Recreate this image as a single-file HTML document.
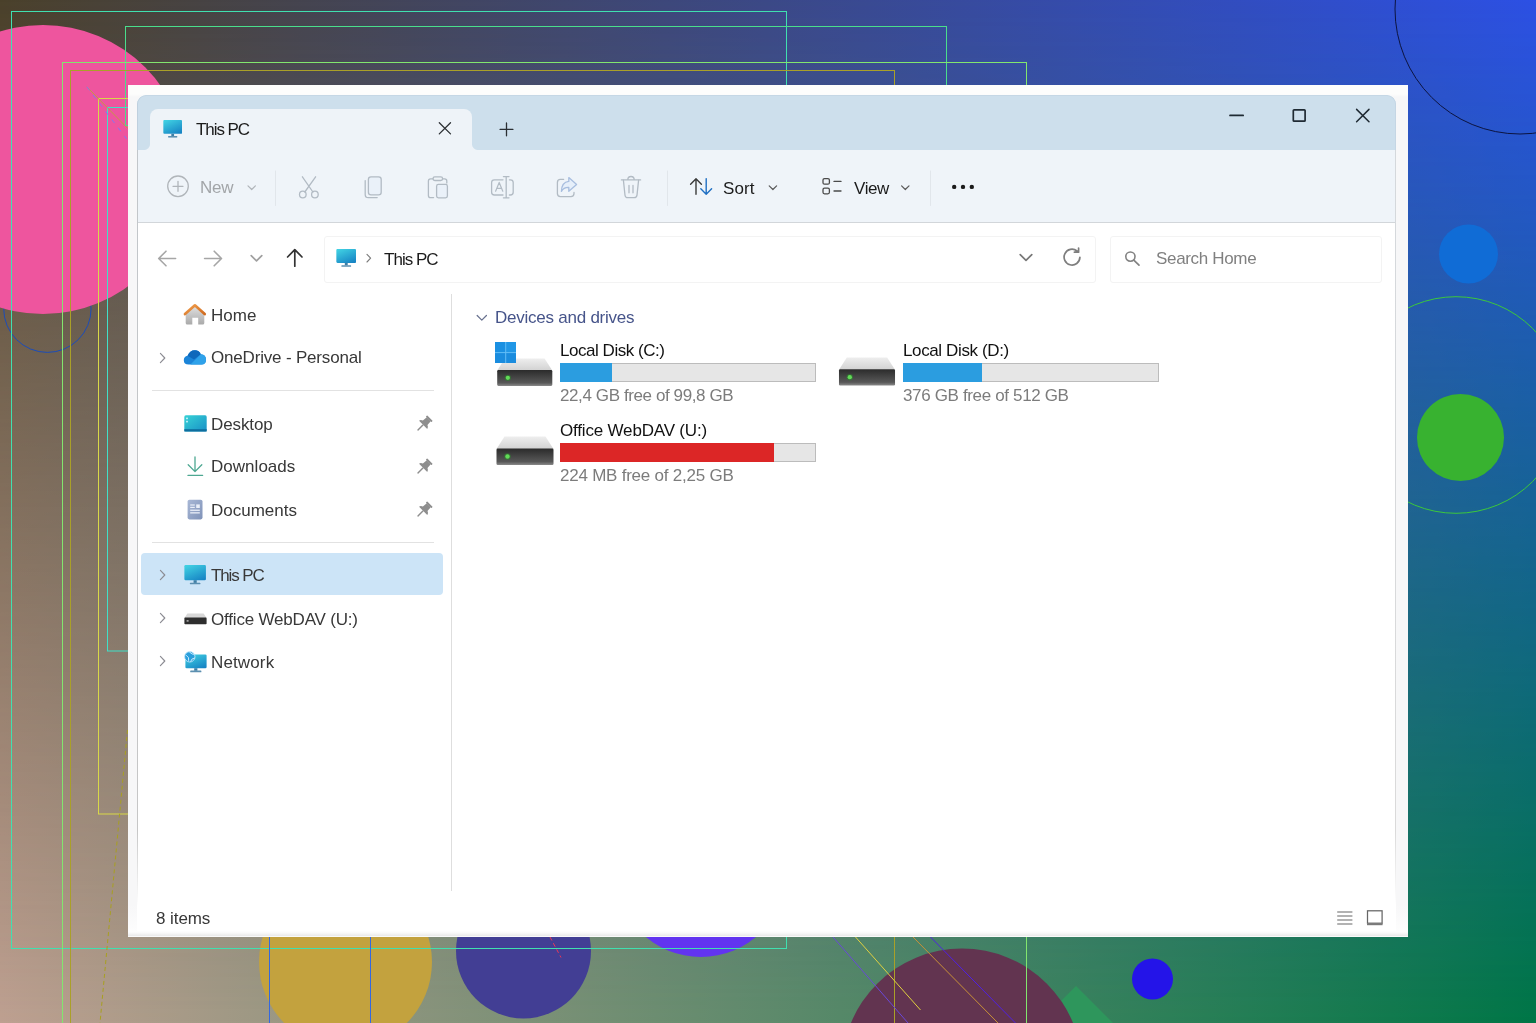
<!DOCTYPE html>
<html lang="en">
<head>
<meta charset="utf-8">
<title>This PC</title>
<style>
*{box-sizing:border-box;margin:0;padding:0}
html,body{width:1536px;height:1023px;overflow:hidden;background:#4a402a}
body{position:relative;font-family:"Liberation Sans",sans-serif;font-size:17px;color:#1b1b1b}
.abs{position:absolute}
#bg1{left:0;top:0;width:1536px;height:1023px;background:linear-gradient(to right,#bea091,#007646)}
#bg2{left:0;top:0;width:1536px;height:1023px;background:linear-gradient(to right,#4a402a,#2c50e4);
 -webkit-mask-image:linear-gradient(to bottom,#000,transparent);mask-image:linear-gradient(to bottom,#000,transparent)}
#deco{left:0;top:0;width:1536px;height:1023px}
/* window */
#frame{left:128px;top:85px;width:1280px;height:852px;background:linear-gradient(to bottom,#fdfdfc 0,#fdfdfc 9px,#f7f7f8 12px,#f7f7f8 820px,#fdfdfd 846px,#fdfdfd 847px,#ececec 850.5px,#fafafa 851.5px)}
#win{left:137px;top:95px;width:1259px;height:836px;background:#fff;border-radius:9px 9px 0 0;overflow:hidden}
#title{left:0;top:0;width:1259px;height:55px;background:#cddfec;border-radius:9px 9px 0 0;box-shadow:inset 0 1px 0 #c5d7e5,inset 1px 0 0 #bfd0de,inset -1px 0 0 #c5d6e4}
#tab{left:13px;top:14px;width:322px;height:41px;background:#eef3f8;border-radius:8px 8px 0 0}
#tab:before,#tab:after{content:"";position:absolute;bottom:0;width:6px;height:6px}
#tab:before{left:-6px;background:radial-gradient(circle at 0 0,transparent 5.5px,#eef3f8 6.5px)}
#tab:after{right:-6px;background:radial-gradient(circle at 100% 0,transparent 5.5px,#eef3f8 6.5px)}
#toolbar{left:0;top:55px;width:1259px;height:73px;background:#eff4f9;border-bottom:1px solid #d2d6da}
.bar{width:256px;height:19px;background:#e6e6e6;border:1px solid #bcbcbc}
.bar i{display:block;height:calc(100% + 2px);margin:-1px 0 0 -1px}
.t{will-change:transform;position:absolute;white-space:nowrap;line-height:20px;height:20px}
</style>
</head>
<body>
<div id="bg1" class="abs"></div>
<div id="bg2" class="abs"></div>
<svg id="deco" class="abs" width="1536" height="1023" viewBox="0 0 1536 1023" fill="none">
  <!-- outline circle under pink -->
  <circle cx="47.4" cy="308.7" r="43.7" stroke="#1c4cb8" stroke-width="1"/>
  <!-- filled circles -->
  <circle cx="43" cy="169.5" r="144.5" fill="#ee559e"/>
  <circle cx="1468.5" cy="254" r="29.5" fill="#106cd6"/>
  <circle cx="1460.5" cy="437.5" r="43.5" fill="#38b230"/>
  <circle cx="345.5" cy="962" r="86.5" fill="#c3a23e"/>
  <circle cx="523.5" cy="951" r="67.5" fill="#423e94"/>
  <circle cx="700.9" cy="871" r="86" fill="#6234f0"/>
  <path d="M1076 986 L1126 1036 L1076 1086 L1026 1036 Z" fill="#2e965c"/>
  <circle cx="962" cy="1068.5" r="120" fill="#623450"/>
  <circle cx="1152.5" cy="979" r="20.5" fill="#2414e8"/>
  <!-- outline circles -->
  <circle cx="1520" cy="9" r="125" stroke="#0c1440" stroke-width="1"/>
  <circle cx="1456" cy="405" r="108.3" stroke="#3cc83c" stroke-width="1"/>
  <!-- thin rectangles -->
  <rect x="11.5" y="11.5" width="775" height="937" stroke="#40e0b0"/>
  <rect x="125.5" y="26.5" width="821" height="99" stroke="#4ade8c"/>
  <rect x="62.5" y="62.5" width="964" height="1000" stroke="#82e66e"/>
  <rect x="70.5" y="70.5" width="824" height="1000" stroke="#aaa028"/>
  <rect x="98.5" y="98.5" width="400" height="715.5" stroke="#d8d848"/>
  <rect x="107.5" y="107.5" width="400" height="543.5" stroke="#40e0c8"/>
  <rect x="269.5" y="800" width="101" height="300" stroke="#3468e0"/>
  <!-- diagonals -->
  <path d="M86.8 86.8 L128 128.7" stroke="#c29a44"/>
  <path d="M86.8 86.8 L126.5 138.8" stroke="#8676f0" stroke-dasharray="4.5 5.8"/>
  <path d="M127.5 730 L100 1023" stroke="#a8a020" stroke-dasharray="4 3"/>
  <path d="M833 937 L908 1023" stroke="#6a48d8"/>
  <path d="M855.5 937 L920.5 1010" stroke="#e0d040"/>
  <path d="M913 937 L998 1023" stroke="#c89038"/>
  <path d="M930.5 937 L1015.5 1023" stroke="#5020e4"/>
  <path d="M550 937 L561 957.5" stroke="#e83858" stroke-dasharray="4 3"/>
</svg>
<div id="frame" class="abs"></div>
<div id="win" class="abs">
  <div id="title" class="abs"></div>
  <div id="tab" class="abs"></div>
  <div id="toolbar" class="abs"></div>
  <div id="pc" class="abs" style="left:-137px;top:-95px;width:1536px;height:1023px">
    <svg width="0" height="0" style="position:absolute">
      <defs>
        <linearGradient id="gpc" x1="0.2" y1="0" x2="0.8" y2="1"><stop offset="0" stop-color="#3fcfe2"/><stop offset="1" stop-color="#1784c4"/></linearGradient>
        <linearGradient id="gdrvtop" x1="0" y1="0" x2="0" y2="1"><stop offset="0" stop-color="#eeeeee"/><stop offset="1" stop-color="#d2d2d2"/></linearGradient>
        <linearGradient id="gdrv" x1="0" y1="0" x2="0" y2="1"><stop offset="0" stop-color="#2b2b2b"/><stop offset="0.8" stop-color="#585858"/><stop offset="1" stop-color="#8a8a8a"/></linearGradient>
        <symbol id="ipc" viewBox="0 0 24 21" preserveAspectRatio="none">
          <rect x="0.4" y="0" width="23.2" height="16.3" rx="1.3" fill="url(#gpc)"/>
          <rect x="10.3" y="16.3" width="3.4" height="2.9" fill="#3f7fa6"/>
          <rect x="6.3" y="19" width="11.4" height="1.8" rx="0.6" fill="#5b8fb0"/>
        </symbol>
        <symbol id="idrv" viewBox="0 0 58 30">
          <path d="M8.5 0.5 H49.5 L57.5 13 H0.5 Z" fill="url(#gdrvtop)"/>
          <rect x="0.5" y="12.5" width="57" height="16.5" rx="1.2" fill="url(#gdrv)"/>
          <circle cx="11.5" cy="20.5" r="3.3" fill="#2c8a2c" opacity="0.55"/>
          <circle cx="11.5" cy="20.5" r="2.2" fill="#62dc58"/>
        </symbol>
        <symbol id="ipin" viewBox="-10 -10 20 20">
          <g transform="rotate(45) scale(1.2)" fill="#8e8e8e">
            <rect x="-3.3" y="-7" width="6.6" height="1.6" rx="0.5"/>
            <path d="M-2.3 -5.6 H2.3 L2.7 -1.4 Q4.8 -0.6 4.8 1 H-4.8 Q-4.8 -0.6 -2.7 -1.4 Z"/>
            <rect x="-0.6" y="0.8" width="1.2" height="6.8" rx="0.5"/>
          </g>
        </symbol>
        <symbol id="ichev" viewBox="0 0 8 12"><path d="M1.4 1.3 L5.8 6 L1.4 10.7" stroke="#8c8c93" stroke-width="1.15" fill="none" stroke-linecap="round" stroke-linejoin="round"/></symbol>
        <symbol id="idown" viewBox="0 0 12 8"><path d="M1.2 1.5 L6 6.3 L10.8 1.5" stroke="currentColor" stroke-width="1.3" fill="none" stroke-linecap="round" stroke-linejoin="round"/></symbol>
      </defs>
    </svg>
    <!--TITLE-->
    <svg class="abs" style="left:162.8px;top:119.9px" width="19.4" height="17.8"><use href="#ipc"/></svg>
    <div class="t" style="left:196.4px;top:120.1px;letter-spacing:-1.07px;color:#1b1b1b">This PC</div>
    <svg class="abs" style="left:436px;top:121px" width="17" height="17" viewBox="0 0 17 17"><path d="M3.3 1.7 L14.5 12.9 M14.5 1.7 L3.3 12.9" stroke="#2b2f33" stroke-width="1.3" stroke-linecap="round"/></svg>
    <svg class="abs" style="left:498px;top:121px" width="17" height="17" viewBox="0 0 17 17"><path d="M8.5 2 V14.8 M2.1 8.4 H14.9" stroke="#2b2f33" stroke-width="1.3" stroke-linecap="round"/></svg>
    <svg class="abs" style="left:1225px;top:105px" width="150" height="22" viewBox="0 0 150 22">
      <path d="M5 10.4 H18.2" stroke="#1f2a33" stroke-width="1.7" stroke-linecap="round"/>
      <rect x="68.3" y="4.8" width="11.8" height="11.4" rx="0.8" stroke="#1f2a33" stroke-width="1.7" fill="none"/>
      <path d="M131.6 4.4 L144 16.8 M144 4.4 L131.6 16.8" stroke="#1f2a33" stroke-width="1.5" stroke-linecap="round"/>
    </svg>
    <!--TOOLBAR-->
    <svg class="abs" style="left:160px;top:168px" width="820" height="40" viewBox="160 168 820 40" fill="none" stroke-linecap="round" stroke-linejoin="round">
      <!-- separators -->
      <path d="M275.5 171 V205.5 M667.5 171 V205.5 M930.5 171 V205.5" stroke="#e1e6eb" stroke-width="1"/>
      <!-- New -->
      <g stroke="#b0b5ba" stroke-width="1.3">
        <circle cx="178" cy="186.3" r="10.3"/>
        <path d="M178 181.3 V191.3 M173 186.3 H183"/>
        <path d="M248 185.8 L251.7 189.5 L255.4 185.8" stroke-width="1.2"/>
      </g>
      <!-- scissors -->
      <g stroke="#b2bbc4" stroke-width="1.3">
        <path d="M302.4 176.8 L312.9 192 M315.6 176.8 L304.8 192"/>
        <circle cx="302.8" cy="194.5" r="3.3"/>
        <circle cx="314.9" cy="194.5" r="3.3"/>
      </g>
      <!-- copy -->
      <g stroke="#b2bbc4" stroke-width="1.3">
        <rect x="368.4" y="176.8" width="12.8" height="18" rx="2.6" fill="#eaf1f9"/>
        <path d="M365.2 180.6 V194.4 Q365.2 197.6 368.4 197.6 H377.2"/>
      </g>
      <!-- paste -->
      <g stroke="#b2bbc4" stroke-width="1.3">
        <path d="M433.6 197.6 H430.6 Q428.4 197.6 428.4 195.4 V181 Q428.4 178.8 430.6 178.8 H433"/>
        <path d="M442.6 178.8 H444.6 Q446.8 178.8 446.8 181 V183"/>
        <rect x="433" y="176.9" width="9.6" height="3.6" rx="1.8"/>
        <rect x="436.6" y="184.4" width="10.8" height="13.4" rx="1.8" fill="#eaf1f9"/>
      </g>
      <!-- rename -->
      <g stroke="#b2bbc4" stroke-width="1.3">
        <path d="M503 179.8 H494.4 Q491.6 179.8 491.6 182.6 V192.2 Q491.6 195 494.4 195 H503"/>
        <path d="M509.4 179.8 H510.4 Q513.2 179.8 513.2 182.6 V192.2 Q513.2 195 510.4 195 H509.4"/>
        <path d="M506.2 176.8 V197.6 M503.4 176.6 H509 M503.4 197.8 H509"/>
        <path d="M495.6 191.2 L499.2 182.4 L502.8 191.2 M496.8 188.4 H501.6" stroke-width="1.2"/>
      </g>
      <!-- share -->
      <g stroke="#b2bbc4" stroke-width="1.3">
        <path d="M563.6 179.4 H560.4 Q557.4 179.4 557.4 182.4 V193.6 Q557.4 196.6 560.4 196.6 H571 Q574 196.6 574 193.6 V192.4"/>
        <path d="M568.8 177.6 L576.6 184.4 L568.8 191.2 V187.4 Q563.6 187.2 561.4 191.4 Q561.6 182.2 568.8 181.4 Z" stroke="#a8bedf" fill="#e6effa"/>
      </g>
      <!-- trash -->
      <g stroke="#b2bbc4" stroke-width="1.3">
        <path d="M621.4 179.9 H640.6 M627.8 179.7 Q627.8 176.5 631 176.5 Q634.2 176.5 634.2 179.7"/>
        <path d="M623.4 180.1 L625 195.2 Q625.3 197.7 627.8 197.7 H634.2 Q636.7 197.7 637 195.2 L638.6 180.1"/>
        <path d="M629 185.4 V192.8 M633 185.4 V192.8"/>
      </g>
      <!-- sort -->
      <path d="M696 194.2 V179 M690.6 184.2 L696 178.8 L701.4 184.2" stroke="#3a3a3a" stroke-width="1.4"/>
      <path d="M706.2 178.6 V193.8 M700.8 188.8 L706.2 194.2 L711.6 188.8" stroke="#1f6fc2" stroke-width="1.4"/>
      <path d="M769.2 185.8 L772.9 189.5 L776.6 185.8" stroke="#5a5a5a" stroke-width="1.2"/>
      <!-- view -->
      <g stroke="#4a4a4a" stroke-width="1.3">
        <rect x="823" y="178.6" width="6.4" height="5.6" rx="1.5"/>
        <rect x="823" y="188.2" width="6.4" height="5.6" rx="1.5"/>
        <path d="M834 181.4 H841 M834 191 H841"/>
      </g>
      <path d="M901.6 185.8 L905.3 189.5 L909 185.8" stroke="#5a5a5a" stroke-width="1.2"/>
      <!-- dots -->
      <g fill="#1b1b1b"><circle cx="954.2" cy="186.9" r="2.2"/><circle cx="963" cy="186.9" r="2.2"/><circle cx="971.8" cy="186.9" r="2.2"/></g>
    </svg>
    <div class="t" style="left:200.0px;top:178.1px;letter-spacing:-0.30px;color:#a2a5a8">New</div>
    <div class="t" style="left:723.0px;top:178.6px;letter-spacing:0.07px;color:#1b1b1b">Sort</div>
    <div class="t" style="left:853.5px;top:178.6px;letter-spacing:-0.40px;color:#1b1b1b">View</div>
    <!--ADDR-->
    <div class="abs" style="left:324px;top:236px;width:772px;height:47px;border:1px solid #f3f3f3;border-radius:3px;background:#fff"></div>
    <div class="abs" style="left:1110px;top:236px;width:272px;height:47px;border:1px solid #f3f3f3;border-radius:3px;background:#fff"></div>
    <svg class="abs" style="left:150px;top:240px" width="1000" height="36" viewBox="150 240 1000 36" fill="none" stroke-linecap="round" stroke-linejoin="round">
      <path d="M175.6 258.5 H159 M166 251.2 L158.7 258.5 L166 265.8" stroke="#a6a6a6" stroke-width="1.6"/>
      <path d="M204.6 258.5 H221.4 M214.2 251.2 L221.5 258.5 L214.2 265.8" stroke="#a6a6a6" stroke-width="1.6"/>
      <path d="M251.2 255.6 L256.5 260.9 L261.8 255.6" stroke="#a0a0a0" stroke-width="1.7"/>
      <path d="M294.8 266.2 V249.8 M287.6 257 L294.8 249.6 L302 257" stroke="#333" stroke-width="1.7"/>
      <path d="M367 254.4 L370.6 258.2 L367 262" stroke="#7a7a7a" stroke-width="1.1"/>
      <path d="M1020.2 254.6 L1026 260.4 L1031.8 254.6" stroke="#787878" stroke-width="1.7"/>
      <path d="M1079.9 257.4 A7.9 7.9 0 1 1 1077 251 M1078.6 248 V252.2 H1074.4" stroke="#7e7e7e" stroke-width="1.7"/>
      <circle cx="1130.4" cy="256.6" r="4.6" stroke="#828282" stroke-width="1.6"/>
      <path d="M1133.8 260.2 L1139 265.2" stroke="#828282" stroke-width="1.7"/>
    </svg>
    <svg class="abs" style="left:335.6px;top:249.3px" width="20.5" height="17.9"><use href="#ipc"/></svg>
    <div class="t" style="left:384.4px;top:249.9px;letter-spacing:-0.98px;color:#1b1b1b">This PC</div>
    <div class="t" style="left:1156.0px;top:249.4px;letter-spacing:-0.33px;color:#808080">Search Home</div>
    <!--NAV-->
    <div class="abs" style="left:137px;top:150px;width:1px;height:756px;background:linear-gradient(to bottom,#c2c6ca,#c6c6c6 90%,rgba(198,198,198,0))"></div>
    <div class="abs" style="left:1395px;top:150px;width:1px;height:756px;background:linear-gradient(to bottom,#d4d8dc,#dadada 90%,rgba(218,218,218,0))"></div>
    <div class="abs" style="left:451px;top:294px;width:1px;height:597px;background:#dedede"></div>
    <div class="abs" style="left:152px;top:390px;width:282px;height:1px;background:#e2e2e2"></div>
    <div class="abs" style="left:152px;top:541.5px;width:282px;height:1px;background:#e2e2e2"></div>
    <div class="abs" style="left:141px;top:553px;width:302px;height:42px;background:#cce4f7;border-radius:4px"></div>
    <!-- chevrons -->
    <svg class="abs" style="left:159px;top:352px" width="8" height="12"><use href="#ichev"/></svg>
    <svg class="abs" style="left:159px;top:569px" width="8" height="12"><use href="#ichev"/></svg>
    <svg class="abs" style="left:159px;top:612.4px" width="8" height="12"><use href="#ichev"/></svg>
    <svg class="abs" style="left:159px;top:655.4px" width="8" height="12"><use href="#ichev"/></svg>
    <!-- home -->
    <svg class="abs" style="left:182px;top:302px" width="26" height="24" viewBox="182 302 26 24">
      <defs><linearGradient id="ghb" x1="0" y1="0" x2="0" y2="1"><stop offset="0" stop-color="#e2e2e2"/><stop offset="1" stop-color="#a9a9a9"/></linearGradient>
      <linearGradient id="ghr" x1="0" y1="0" x2="1" y2="1"><stop offset="0" stop-color="#f2a04e"/><stop offset="1" stop-color="#cf6a1e"/></linearGradient></defs>
      <path d="M185.7 313.4 L194.9 305.6 L204.3 313.4 V323 Q204.3 324.6 202.7 324.6 H198.2 V317.8 H192.3 V324.6 H187.3 Q185.7 324.6 185.7 323 Z" fill="url(#ghb)"/>
      <path d="M185 314 L194.9 305.3 L204.7 314" stroke="url(#ghr)" stroke-width="2.7" fill="none" stroke-linecap="round" stroke-linejoin="round"/>
    </svg>
    <!-- onedrive -->
    <svg class="abs" style="left:183px;top:349px" width="24" height="17" viewBox="183 349 24 17">
      <path d="M188.6 364.6 Q183.8 364.6 183.8 360.2 Q183.8 356.4 187.6 355.8 Q189.6 350.2 195 350.2 Q199.2 350.2 200.8 354.2 Q206 354.6 206 359.6 Q206 364.6 201.4 364.6 Z" fill="#1b84d8"/>
      <path d="M187.6 355.8 Q189.6 350.2 195 350.2 Q199.2 350.2 200.8 354.2 L194 359.4 Z" fill="#0f68bb"/>
      <path d="M200.8 354.2 Q206 354.6 206 359.6 Q206 364.6 201.4 364.6 H190.4 Z" fill="#2fa2ea"/>
    </svg>
    <!-- desktop -->
    <svg class="abs" style="left:183.5px;top:415px" width="23" height="17" viewBox="0 0 23 17">
      <defs><linearGradient id="gdk" x1="0" y1="0" x2="1" y2="1"><stop offset="0" stop-color="#37d2d6"/><stop offset="1" stop-color="#1890c6"/></linearGradient></defs>
      <rect x="0.3" y="0.3" width="22.4" height="16.2" rx="1.6" fill="url(#gdk)"/>
      <rect x="0.3" y="14.2" width="22.4" height="2.3" fill="#0e6e9e"/>
      <rect x="2.2" y="2.6" width="1.6" height="1.6" fill="#d8f8ff"/><rect x="2.2" y="5.8" width="1.6" height="1.6" fill="#d8f8ff"/>
    </svg>
    <!-- downloads -->
    <svg class="abs" style="left:185px;top:455px" width="20" height="22" viewBox="185 455 20 22" fill="none" stroke-linecap="round" stroke-linejoin="round">
      <path d="M195 457 V471.4 M188.2 464.8 L195 471.6 L201.8 464.8" stroke="#4ea892" stroke-width="1.3"/>
      <path d="M188 475.4 H202.6" stroke="#4ea892" stroke-width="1.3"/>
    </svg>
    <!-- documents -->
    <svg class="abs" style="left:187px;top:499px" width="17" height="21" viewBox="0 0 17 21">
      <defs><linearGradient id="gdoc" x1="0" y1="0" x2="1" y2="1"><stop offset="0" stop-color="#a9b8d6"/><stop offset="1" stop-color="#7f92b8"/></linearGradient></defs>
      <rect x="0.6" y="0.8" width="14.9" height="19.6" rx="1.8" fill="url(#gdoc)"/>
      <rect x="9.2" y="5.4" width="3.6" height="3.6" fill="#e9eef8"/>
      <rect x="3.2" y="5.4" width="4.6" height="1.2" fill="#e9eef8"/><rect x="3.2" y="7.8" width="4.6" height="1.2" fill="#e9eef8"/>
      <rect x="3.2" y="10.6" width="9.6" height="1.3" fill="#e9eef8"/><rect x="3.2" y="13.2" width="9.6" height="1.3" fill="#e9eef8"/>
    </svg>
    <!-- pins -->
    <svg class="abs" style="left:414.1px;top:414.25px" width="20" height="20"><use href="#ipin"/></svg>
    <svg class="abs" style="left:414.1px;top:457.25px" width="20" height="20"><use href="#ipin"/></svg>
    <svg class="abs" style="left:414.1px;top:500.25px" width="20" height="20"><use href="#ipin"/></svg>
    <!-- this pc -->
    <svg class="abs" style="left:183.8px;top:565.4px" width="22.3" height="19.6"><use href="#ipc"/></svg>
    <!-- webdav drive -->
    <svg class="abs" style="left:183.5px;top:613px" width="23" height="12" viewBox="0 0 23 12">
      <path d="M3.4 0.6 H19.6 L22.6 5 H0.4 Z" fill="#d8d8d8"/>
      <rect x="0.4" y="4.6" width="22.2" height="6.6" rx="0.8" fill="#2e2e2e"/>
      <rect x="2.6" y="7.2" width="2" height="1.4" fill="#bdbdbd"/>
    </svg>
    <!-- network -->
    <svg class="abs" style="left:183.5px;top:650.5px" width="23" height="22" viewBox="0 0 23 22">
      <rect x="1.4" y="3.4" width="21.2" height="13.8" rx="1.3" fill="url(#gpc)"/>
      <rect x="10.2" y="17.2" width="3.2" height="2.6" fill="#3f7fa6"/>
      <rect x="6.2" y="19.6" width="11.2" height="1.7" rx="0.6" fill="#5b8fb0"/>
      <circle cx="5.8" cy="5.8" r="5.2" fill="#2a9fdc" stroke="#bfe6fa" stroke-width="0.9"/>
      <path d="M2.2 4.2 Q5.6 6.4 4.6 9.8 M5.2 0.8 Q8.4 3.8 10.2 3.4 M6.6 10.6 Q7.4 7.2 10.8 7" stroke="#d6f1ff" stroke-width="0.9" fill="none"/>
    </svg>
    <div class="t" style="left:210.7px;top:305.7px;letter-spacing:0.00px;color:#383838">Home</div>
    <div class="t" style="left:210.7px;top:348.4px;letter-spacing:-0.18px;color:#383838">OneDrive - Personal</div>
    <div class="t" style="left:210.7px;top:414.5px;letter-spacing:-0.10px;color:#383838">Desktop</div>
    <div class="t" style="left:210.7px;top:457.1px;letter-spacing:0.03px;color:#383838">Downloads</div>
    <div class="t" style="left:210.7px;top:500.5px;letter-spacing:0.00px;color:#383838">Documents</div>
    <div class="t" style="left:211.2px;top:566.3px;letter-spacing:-1.13px;color:#383838">This PC</div>
    <div class="t" style="left:211.2px;top:609.7px;letter-spacing:-0.19px;color:#383838">Office WebDAV (U:)</div>
    <div class="t" style="left:211.2px;top:652.7px;letter-spacing:0.13px;color:#383838">Network</div>
    <!--CONTENT-->
    <svg class="abs" style="left:476px;top:314.3px;color:#6a7390" width="11.6" height="7.8"><use href="#idown"/></svg>
    <div class="t" style="left:495.4px;top:308.3px;letter-spacing:-0.24px;color:#46548a">Devices and drives</div>
    <!-- drive C -->
    <svg class="abs" style="left:496px;top:358px" width="57.5" height="29"><use href="#idrv"/></svg>
    <svg class="abs" style="left:495px;top:342px" width="21.4" height="21.2" viewBox="0 0 21.4 21.2">
      <rect x="0" y="0" width="21.4" height="21.2" fill="#62bdf6"/>
      <rect x="0" y="0" width="10.2" height="10.1" fill="#1a90e2"/><rect x="11.2" y="0" width="10.2" height="10.1" fill="#2197e6"/>
      <rect x="0" y="11.1" width="10.2" height="10.1" fill="#1a8cde"/><rect x="11.2" y="11.1" width="10.2" height="10.1" fill="#1a8cde"/>
    </svg>
    <div class="abs bar" style="left:560px;top:363px"><i style="width:51.5px;background:#2b9de0"></i></div>
    <div class="t" style="left:560.2px;top:341.2px;letter-spacing:-0.46px;color:#111">Local Disk (C:)</div>
    <div class="t" style="left:560.2px;top:385.7px;letter-spacing:-0.40px;color:#7c7c7c">22,4 GB free of 99,8 GB</div>
    <!-- drive U -->
    <svg class="abs" style="left:495.5px;top:436px" width="58" height="30"><use href="#idrv"/></svg>
    <div class="abs bar" style="left:560px;top:443px"><i style="width:214px;background:#dc2626"></i></div>
    <div class="t" style="left:560.2px;top:421.2px;letter-spacing:-0.18px;color:#111">Office WebDAV (U:)</div>
    <div class="t" style="left:560.2px;top:465.6px;letter-spacing:-0.23px;color:#7c7c7c">224 MB free of 2,25 GB</div>
    <!-- drive D -->
    <svg class="abs" style="left:838px;top:356.5px" width="58" height="29.5"><use href="#idrv"/></svg>
    <div class="abs bar" style="left:903px;top:363px"><i style="width:78.5px;background:#2b9de0"></i></div>
    <div class="t" style="left:903.2px;top:341.2px;letter-spacing:-0.38px;color:#111">Local Disk (D:)</div>
    <div class="t" style="left:903.2px;top:385.7px;letter-spacing:-0.35px;color:#7c7c7c">376 GB free of 512 GB</div>
    <!--STATUS-->
    <div class="t" style="left:156.3px;top:908.8px;letter-spacing:-0.07px;color:#383838">8 items</div>
    <svg class="abs" style="left:1334px;top:906px" width="52" height="22" viewBox="1334 906 52 22" fill="none">
      <path d="M1337.2 912 H1352.4 M1337.2 916 H1352.4 M1337.2 920 H1352.4 M1337.2 924 H1352.4" stroke="#666" stroke-width="1.15"/>
      <rect x="1367.5" y="910.8" width="14.6" height="12.4" stroke="#666" stroke-width="1.25"/>
      <path d="M1367 924.2 H1382.6" stroke="#7a7a7a" stroke-width="2"/>
    </svg>
  </div>
</div>
</body>
</html>
